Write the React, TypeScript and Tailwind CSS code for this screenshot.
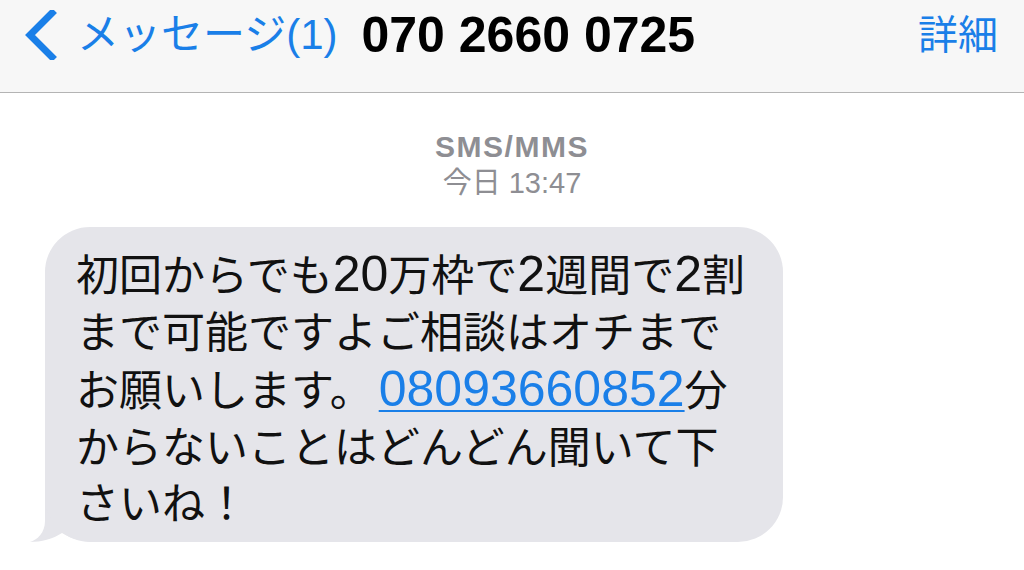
import React from "react";

function D({ children }: { children: React.ReactNode }) {
  return <span className="text-[50px]">{children}</span>;
}

export default function App() {
  const jp = { fontFamily: '"Liberation Sans", "Noto Sans CJK JP", sans-serif' };
  return (
    <div className="w-[1024px] h-[570px] bg-white overflow-hidden" style={jp}>
      <header className="h-[93px] bg-[#f7f7f7] border-b border-[#b4b4b4] flex items-start">
        <div className="h-[70px] w-full flex items-center">
          <svg width="34" height="50" viewBox="0 0 34 50" className="ml-[23px]">
            <path d="M29 3 L7 25 L29 47" fill="none" stroke="#1a7fe8" strokeWidth="7" strokeLinecap="square" strokeLinejoin="miter" />
          </svg>
          <span className="ml-[20px] text-[42px] leading-none text-[#1a7fe8] whitespace-nowrap">メッセージ(1)</span>
          <span className="ml-[24px] text-[50px] leading-none font-bold text-black whitespace-nowrap">070 2660 0725</span>
          <span className="ml-auto mr-[26px] text-[40px] leading-none text-[#1a7fe8]">詳細</span>
        </div>
      </header>
      <div className="mt-[36px] flex flex-col items-center text-[#8e8e93]">
        <div className="text-[30px] leading-[36px] font-bold tracking-[1.5px]">SMS/MMS</div>
        <div className="text-[29px] leading-[36px]">今日 13:47</div>
      </div>
      <div className="mt-[26px] ml-[45px] relative w-[738px]">
        <div className="relative bg-[#e5e5ea] rounded-[45px] pl-[31px] pt-[19px] pb-[9px] text-[43px] leading-[56.5px] text-[#111] whitespace-nowrap z-10">
          <div>
            初回からでも<D>20</D>万枠で<D>2</D>週間で<D>2</D>割
          </div>
          <div>まで可能ですよご相談はオチまで</div>
          <div>
            お願いします。<span className="ml-[6px] text-[50px] text-[#1a7fe8] underline decoration-[2px] underline-offset-[4px]">08093660852</span>分
          </div>
          <div>からないことはどんどん聞いて下</div>
          <div>さいね！</div>
        </div>
        <svg className="absolute left-[-16px] bottom-0 z-0" width="80" height="52" viewBox="0 0 80 52">
          <path d="M16 0 L16 31 C16 43 8 50 1 52 C12 52 24 49 33 43 C42 49 55 52 72 52 L72 0 Z" fill="#e5e5ea" />
        </svg>
      </div>
    </div>
  );
}
